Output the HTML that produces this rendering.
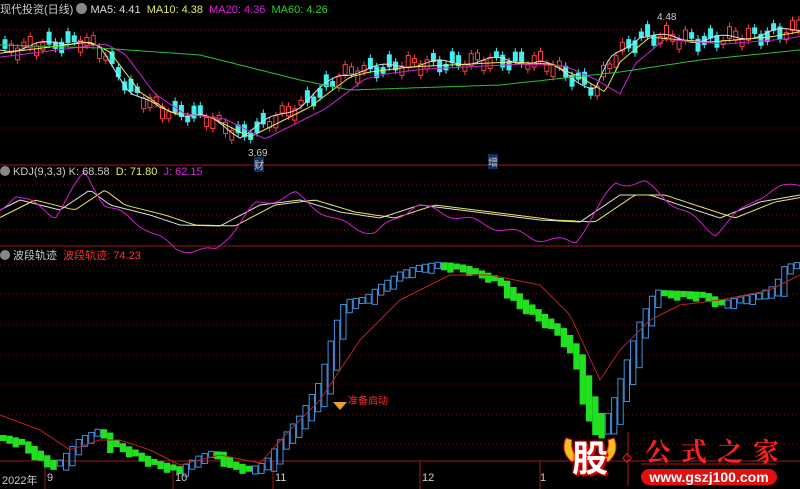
<!DOCTYPE html>
<html><head><meta charset="utf-8"><style>
body{margin:0;background:#000;width:800px;height:489px;overflow:hidden;font-family:"Liberation Sans","Noto Sans CJK SC",sans-serif}
svg{position:absolute;left:0;top:0}
.t{position:absolute;font-size:11px;white-space:nowrap}
</style></head><body>
<svg id="s" width="800" height="489"></svg>
<div class="t" style="left:0;top:1px;color:#ccc">现代投资(日线) <span style="display:inline-block;width:11px;height:11px;border-radius:6px;background:#888;vertical-align:-1px"></span> <span style="color:#ddd">MA5: 4.41</span> &nbsp;<span style="color:#e8e85a">MA10: 4.38</span> &nbsp;<span style="color:#e020e0">MA20: 4.36</span> &nbsp;<span style="color:#30d030">MA60: 4.26</span></div>
<div class="t" style="left:0;top:166px;color:#ccc"><span style="display:inline-block;width:10px;height:10px;border-radius:5px;background:#888;vertical-align:-1px"></span> KDJ(9,3,3) K: 68.58 &nbsp;<span style="color:#e8e85a">D: 71.80</span> &nbsp;<span style="color:#e020e0">J: 62.15</span></div>
<div class="t" style="left:0;top:247px;color:#ccc"><span style="display:inline-block;width:10px;height:10px;border-radius:5px;background:#888;vertical-align:-1px"></span> 波段轨迹 &nbsp;<span style="color:#ff3030">波段轨迹: 74.23</span></div>
<div class="t" style="left:348px;top:392px;color:#ff3030;font-size:10px">准备启动</div>
<div class="t" style="left:657px;top:12px;color:#ccc;font-size:10px">4.48</div>
<div class="t" style="left:248px;top:148px;color:#ccc;font-size:10px">3.69</div>
<div class="t" style="left:254px;top:157px;color:#ccc;font-size:10px;background:#103060">财</div>
<div class="t" style="left:488px;top:154px;color:#ccc;font-size:10px;background:#103060">增</div>
<div class="t" style="left:2px;top:472px;color:#ccc;font-size:11px">2022年</div>
<div class="t" style="left:47px;top:472px;color:#ccc">9</div>
<div class="t" style="left:175px;top:472px;color:#ccc">10</div>
<div class="t" style="left:275px;top:472px;color:#ccc">11</div>
<div class="t" style="left:422px;top:472px;color:#ccc">12</div>
<div class="t" style="left:540px;top:472px;color:#ccc">1</div>
<div class="t" style="left:572px;top:430px;color:#fff;font-size:36px;font-weight:bold;text-shadow:0 0 3px #f00,0 0 3px #f00,2px 2px 0 #c00">股</div>
<div class="t" style="left:645px;top:432px;color:#ff2020;font-size:26px;letter-spacing:10px;font-family:'Noto Serif CJK SC',serif;font-weight:bold">公式之家</div>
<div class="t" style="left:641px;top:469px;width:136px;height:16px;border-radius:8px;background:#e01010;color:#fff;font-size:14px;font-weight:bold;text-align:center;line-height:16px">www.gszj100.com</div>
<script>
var s=document.getElementById('s'),h='';
function L(x1,y1,x2,y2,c,w,d){h+='<line x1="'+x1+'" y1="'+y1+'" x2="'+x2+'" y2="'+y2+'" stroke="'+c+'" stroke-width="'+(w||1)+'"'+(d?' stroke-dasharray="'+d+'"':'')+'/>';}
function interp(p,x){for(var i=1;i<p.length;i++){if(x<=p[i][0]){var a=p[i-1],b=p[i];return a[1]+(b[1]-a[1])*(x-a[0])/(b[0]-a[0]);}}return p[p.length-1][1];}
function poly(p,c,off){var pts=[];for(var x=0;x<=800;x+=4)pts.push(x+','+(interp(p,x)+(off?off(x):0)).toFixed(1));h+='<polyline fill="none" stroke="'+c+'" stroke-width="1" points="'+pts.join(' ')+'"/>';}
[30,62,95,128].forEach(function(y){L(0,y,800,y,'#701010',1,'1 3')});
[185,200,215,230].forEach(function(y){L(0,y,800,y,'#701010',1,'1 3')});
[265,294,325,355,384,415,444].forEach(function(y){L(0,y,800,y,'#701010',1,'1 3')});
L(0,165,800,165,'#a01818');L(0,246,800,246,'#a01818');L(0,461,800,461,'#a01818');
[45,173,273,420,540].forEach(function(x){L(x,461,x,489,'#a01818')});
var P=[[0,50],[40,45],[80,40],[100,50],[130,90],[160,110],[200,115],[240,135],[260,125],[300,105],[340,75],[360,70],[400,65],[460,62],[500,60],[540,62],[570,75],[595,90],[610,60],[640,35],[660,37],[700,40],[760,35],[800,28]];
for(var x=3;x<800;x+=6.3){var y=interp(P,x)+Math.sin(x*1.7)*6,up=Math.sin(x*0.9+1)>0,b=4+Math.abs(Math.sin(x*2.3))*8;
L(x+2,y-b/2-4,x+2,y+b/2+4,up?'#ff4040':'#40f0f0');
h+='<rect x="'+x+'" y="'+(y-b/2)+'" width="4" height="'+b+'" fill="'+(up?'#000':'#40f0f0')+'" stroke="'+(up?'#ff4040':'#40f0f0')+'"/>';}
poly(P,'#ddd',function(x){return Math.sin(x/9)*3});
poly(P.map(function(p){return[p[0]+10,p[1]+2]}),'#e8e85a');
poly(P.map(function(p){return[p[0]+25,p[1]+4]}),'#d020d0');
poly([[0,45],[100,48],[200,55],[300,80],[350,90],[500,85],[620,72],[700,60],[800,50]],'#30c030');
var K=[[0,210],[20,200],[40,205],[60,210],[90,190],[110,205],[150,215],[180,225],[220,226],[260,205],[300,200],[340,212],[380,218],[420,205],[460,210],[500,215],[540,220],[580,222],[620,195],[650,195],[680,205],[720,218],[760,202],[800,195]];
poly(K,'#ddd');poly(K.map(function(p){return[p[0]+15,p[1]]}),'#e8e85a');
poly(K.map(function(p){return[p[0]-5,205+(p[1]-205)*2.2]}),'#d020d0',function(x){return Math.sin(x/7)*3});
var W=[[0,435],[20,440],[50,462],[60,460],[80,438],[100,428],[110,440],[120,445],[150,460],[180,468],[200,455],[215,450],[230,462],[250,468],[265,462],[280,440],[300,415],[320,380],[335,325],[345,300],[365,297],[380,285],[400,272],[420,265],[440,262],[460,265],[480,272],[500,280],[520,300],[540,315],[560,330],[575,350],[590,400],[600,425],[610,410],[620,380],[640,320],[655,290],[700,292],[720,302],[740,297],[760,293],[775,285],[785,265],[800,262]];
var prev=interp(W,0),i=0;
for(var x=0;x<800;x+=6.3,i++){var v=interp(W,x+3),up=v<prev,d=Math.abs(v-prev),hh=Math.max(d*2.2,6)+(i%3)*2,t=up?v:prev;
if(up)h+='<rect x="'+(x+0.5)+'" y="'+t+'" width="5.3" height="'+hh+'" fill="none" stroke="#4090e0"/>';
else h+='<rect x="'+x+'" y="'+t+'" width="6.3" height="'+hh+'" fill="#20e020"/>';prev=v;}
poly([[0,415],[40,430],[70,450],[100,440],[120,440],[150,450],[180,465],[220,455],[260,463],[290,430],[320,400],[360,340],[400,300],[450,275],[490,275],[540,285],[570,315],[600,380],[620,350],[650,320],[680,305],[720,300],[770,290],[800,275]],'#c02020');
h+='<path d="M333,402 L347,402 L340,410 Z" fill="#f0a030"/>';
h+='<path d="M566,438 Q560,452 572,462 L578,458 Q570,450 572,440Z" fill="#f0c020" stroke="#e02020"/><path d="M614,438 Q620,452 608,462 L602,458 Q610,450 608,440Z" fill="#f0c020" stroke="#e02020"/>';
L(628,432,628,486,'#c01010');h+='<rect x="624" y="455" width="6" height="6" transform="rotate(45 627 458)" fill="none" stroke="#e02020"/>';
L(641,464,776,464,'#c01010');
s.innerHTML=h;
</script>
</body></html>
